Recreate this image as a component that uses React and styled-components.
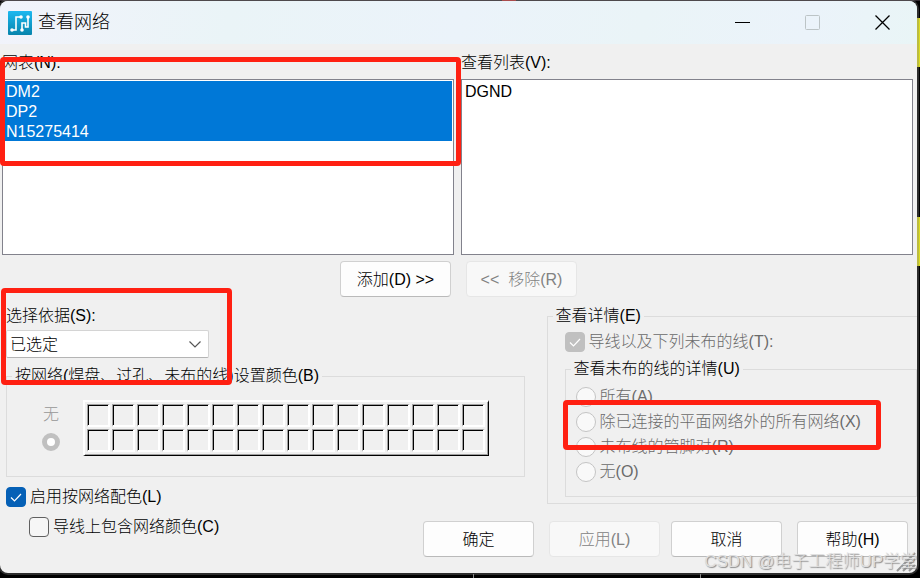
import React, { useState } from 'react';
import styled, { createGlobalStyle, css } from 'styled-components';

const GlobalStyle = createGlobalStyle`
  * {
    box-sizing: border-box;
  }

  body {
    margin: 0;
    background: #000;
    color: #000;
    font: 300 16px/20px "Liberation Sans", "Noto Sans CJK SC", sans-serif;
  }

  button, select, input {
    font: inherit;
    color: inherit;
    margin: 0;
  }
`;

const Desktop = styled.div`
  position: relative;
  min-height: 100vh;
  padding: 1px 3px 5px 0;
  overflow: hidden;
  background:
    linear-gradient(#dcdc20, #dcdc20) right 18px / 3px 49px no-repeat,
    linear-gradient(#dcdc20, #dcdc20) right 217px / 3px 49px no-repeat,
    linear-gradient(#c03030, #c03030) 502px 0 / 14px 1px no-repeat,
    linear-gradient(#888, #888) 473px bottom / 1px 4px no-repeat,
    linear-gradient(#888, #888) 700px bottom / 1px 4px no-repeat,
    linear-gradient(#332b31, #332b31) 0 0 / 100% 1px no-repeat,
    #000;
`;

const Dialog = styled.main`
  position: relative;
  overflow: hidden;
  border-radius: 8px;
  background: #f0f0f0;
  box-shadow: 0 0 0 2px rgba(128, 128, 128, 0.35);
`;

const TitleBar = styled.header`
  display: flex;
  align-items: center;
  height: 43px;
  padding-left: 8px;
  background: linear-gradient(100deg, #f1f3fb, #eaf4f7 25%, #ebf3fa 50%, #eaf4f7 70%, #ebf3fa 88%, #e9f5f6);
`;

const Title = styled.h1`
  flex: 1;
  margin: 0 0 2px 6px;
  font-size: 18px;
  line-height: 24px;
  font-weight: 300;
`;

const WindowButton = styled.button`
  display: flex;
  align-items: center;
  justify-content: center;
  width: 70px;
  height: 42px;
  padding: 0;
  border: 0;
  background: none;
`;

const Lists = styled.section`
  display: grid;
  grid-template-columns: 1fr 1fr;
  gap: 7px;
  padding: 9px 4px 0 2px;
`;

const Field = styled.div`
  position: relative;
  display: flex;
  flex-direction: column;
  align-items: ${props => (props.$stretch ? 'stretch' : 'flex-start')};
  gap: ${props => (props.$stretch ? 6 : 4)}px;
`;

const ListBox = styled.select`
  height: 176px;
  padding: 1px;
  border: 1px solid #82828c;
  border-radius: 0;
  background: #fff;
  overflow-y: auto;
  outline: none;

  option {
    height: 20px;
    min-height: 20px;
    padding: 2px 2px 0;
    line-height: 18px;
  }

  option:checked {
    background: linear-gradient(#0078d7, #0078d7);
    -webkit-text-fill-color: #fff;
  }
`;

const Button = styled.button`
  width: 111px;
  height: 36px;
  padding: 2px 0 0;
  border: 1px solid #d0d0d0;
  border-bottom-color: #bababa;
  border-radius: 4px;
  background: #fdfdfd;
  white-space: pre;

  &:disabled {
    border-color: #e6e6e6;
    background: #f8f8f8;
    color: #828282;
  }
`;

const ButtonPair = styled.div`
  display: flex;
  justify-content: center;
  gap: 15px;
`;

const Transfer = styled(ButtonPair)`
  padding-top: 6px;
`;

const Options = styled.section`
  display: grid;
  grid-template-columns: 7fr 5fr;
  gap: 22px;
  padding: 9px 0 0 6px;
`;

const Combo = styled.div`
  position: relative;

  select {
    display: block;
    width: 203px;
    height: 28px;
    padding: 2px 28px 0 3px;
    appearance: none;
    border: 1px solid #d4d4d4;
    border-bottom-color: #b4b4b4;
    border-radius: 2px;
    background: #fff;
  }

  svg {
    position: absolute;
    top: 11px;
    right: 8px;
    pointer-events: none;
  }
`;

const Group = styled.fieldset`
  min-width: 0;
  margin: 0;
  padding: 0;
  border: 1px solid #dcdcdc;

  legend {
    margin-left: 5px;
    padding: 0 3px;
    white-space: nowrap;
  }
`;

const ColorGroup = styled(Group)`
  margin: 8px 0 10px;

  > div {
    display: flex;
    gap: 22px;
    padding: 14px 0 20px 34px;
  }
`;

const DetailGroup = styled(Group)`
  border-right: 0;

  > div {
    padding: 6px 0 6px 17px;
  }
`;

const NetGroup = styled(Group)`
  position: relative;
  margin-top: 7px;

  > div:first-of-type {
    display: grid;
    gap: 5px;
    padding: 8px 0 14px 10px;
  }
`;

const NoneOption = styled.label`
  display: flex;
  flex-direction: column;
  align-items: center;
  gap: 8px;
  width: 20px;
  padding-top: 5px;
  color: #969696;
`;

const Palette = styled.div`
  display: grid;
  grid-template-columns: repeat(16, 23px);
  gap: 2px;
  padding: 2px 3px 3px 2px;
  border: 2px solid #fff;
  border-right: 1px solid #000;
  border-bottom: 1px solid #000;
  box-shadow: inset -1px -1px #a0a0a0;
`;

const Swatch = styled.button`
  height: 23px;
  padding: 0;
  border: solid;
  border-width: 1px 2px 2px 1px;
  border-color: #a0a0a0 #fff #fff #a0a0a0;
  background: #f0f0f0;
  box-shadow: inset 1px 1px #000;
`;

const Choice = styled.label`
  display: flex;
  align-items: center;
  gap: 4px;
  white-space: nowrap;
  color: ${props => (props.$disabled ? '#6a6a6a' : '#000')};
`;

const tick = "url(\"data:image/svg+xml,%3Csvg xmlns='http://www.w3.org/2000/svg' width='18' height='18' fill='none' stroke='white' stroke-width='1.2'%3E%3Cpath d='M4 9.5l3.5 3.5L14 6'/%3E%3C/svg%3E\")";

const CheckBox = styled.input.attrs({ type: 'checkbox' })`
  appearance: none;
  flex: none;
  width: 20px;
  height: 20px;
  border: 1px solid #606060;
  border-radius: 4px;
  background: #f6f6f6;

  &:checked {
    border-color: #0560b6;
    background: #0560b6 ${tick} center no-repeat;
  }

  &:checked:disabled {
    border-color: #c0c0c0;
    background-color: #c0c0c0;
  }
`;

const Radio = styled.input.attrs({ type: 'radio' })`
  appearance: none;
  flex: none;
  width: 20px;
  height: 20px;
  border: 1px solid #c4c4c4;
  border-radius: 50%;
  background: #f9f9f9;

  ${props => props.$small && css`
    width: 18px;
    height: 18px;
    border: 5px solid #c0c0c0;
    background: #fff;
  `}
`;

const Footer = styled.footer`
  display: flex;
  align-items: flex-start;
  gap: 11px;
  padding: 14px 9px 16px 29px;

  > label {
    margin: -4px auto 0 0;
  }
`;

// red frame laid over the settings that matter
const Mark = styled.div`
  position: absolute;
  top: ${props => props.$top}px;
  left: ${props => props.$left}px;
  width: ${props => props.$width || 'auto'};
  right: ${props => (props.$right === undefined ? 'auto' : `${props.$right}px`)};
  height: ${props => props.$height}px;
  border: 5px solid #ff2012;
  border-radius: 4px;
  pointer-events: none;
  z-index: 1;
`;

const Grip = styled.svg`
  position: absolute;
  right: 1px;
  bottom: 1px;
`;

const Watermark = styled.div`
  position: absolute;
  right: 3px;
  bottom: 4px;
  font-size: 17px;
  line-height: 24px;
  white-space: nowrap;
  color: #dedede;
  text-shadow: 1px 1px 1px #8c8c8c;
  pointer-events: none;
`;

const AppIcon = () => (
  <svg width="24" height="24" viewBox="0 0 24 24" fill="none" aria-hidden="true">
    <defs>
      <linearGradient id="tile" x1="0" y1="0" x2="0" y2="1">
        <stop stopColor="#1cb8f0" />
        <stop offset="1" stopColor="#0784ac" />
      </linearGradient>
    </defs>
    <rect width="24" height="24" rx="1" fill="url(#tile)" />
    <path d="M4 19h4V6h5M14 19v-7h3.5v4H20V6" stroke="#fff" strokeWidth="1.6" />
    <g fill="#fff">
      <circle cx="4" cy="19" r="1.8" />
      <circle cx="13" cy="6" r="1.8" />
      <circle cx="14" cy="19" r="1.8" />
      <circle cx="20" cy="6" r="1.8" />
    </g>
  </svg>
);

const nets = ['DM2', 'DP2', 'N15275414'];
const details = ['所有(A)', '除已连接的平面网络外的所有网络(X)', '未布线的管脚对(R)', '无(O)'];
const swatches = Array.from({ length: 32 }, (_, i) => i + 1);

const App = () => {
  const [selected, setSelected] = useState(nets);
  const [useColors, setUseColors] = useState(true);
  const [includeTraces, setIncludeTraces] = useState(false);

  const handleSelect = (e) => {
    setSelected(Array.from(e.target.selectedOptions, option => option.value));
  };

  return (
    <Desktop>
      <GlobalStyle />
      <Dialog>
        <TitleBar>
          <AppIcon />
          <Title>查看网络</Title>
          <WindowButton aria-label="最小化">
            <svg width="15" height="15"><path d="M0 7.5h15" stroke="#000" /></svg>
          </WindowButton>
          <WindowButton aria-label="最大化" disabled>
            <svg width="15" height="15"><rect x=".5" y=".5" width="14" height="14" rx="1" fill="none" stroke="#bcc4c6" /></svg>
          </WindowButton>
          <WindowButton aria-label="关闭">
            <svg width="15" height="15"><path d="M.5 .5l14 14M14.5 .5l-14 14" stroke="#000" strokeWidth="1.3" /></svg>
          </WindowButton>
        </TitleBar>

        <Lists>
          <Field $stretch>
            <label htmlFor="nets">网表(N):</label>
            <ListBox id="nets" multiple value={selected} onChange={handleSelect}>
              {nets.map(net => <option key={net} value={net}>{net}</option>)}
            </ListBox>
            <Mark $top={4} $left={-2} $right={-7} $height={109} />
          </Field>
          <Field $stretch>
            <label htmlFor="view">查看列表(V):</label>
            <ListBox id="view" multiple>
              <option>DGND</option>
            </ListBox>
          </Field>
        </Lists>

        <Transfer>
          <Button>{'添加(D) >>'}</Button>
          <Button disabled>{'<<  移除(R)'}</Button>
        </Transfer>

        <Options>
          <div>
            <Field>
              <label htmlFor="by">选择依据(S):</label>
              <Combo>
                <select id="by">
                  <option>已选定</option>
                </select>
                <svg width="12" height="7" fill="none"><path d="M.5 .5L6 6l5.5-5.5" stroke="#555" strokeWidth="1.2" /></svg>
              </Combo>
              <Mark $top={-18} $left={-5} $width="231px" $height={97} />
            </Field>

            <ColorGroup>
              <legend>按网络(焊盘、过孔、未布的线)设置颜色(B)</legend>
              <div>
                <NoneOption>
                  无
                  <Radio $small name="color" disabled />
                </NoneOption>
                <Palette>
                  {swatches.map(n => <Swatch key={n} disabled aria-label={`颜色 ${n}`} />)}
                </Palette>
              </div>
            </ColorGroup>

            <Choice>
              <CheckBox checked={useColors} onChange={() => setUseColors(!useColors)} />
              启用按网络配色(L)
            </Choice>
          </div>

          <div>
            <DetailGroup>
              <legend>查看详情(E)</legend>
              <div>
                <Choice $disabled>
                  <CheckBox defaultChecked disabled />
                  导线以及下列未布的线(T):
                </Choice>
                <NetGroup>
                  <legend>查看未布的线的详情(U)</legend>
                  <div>
                    {details.map(text => (
                      <Choice key={text} $disabled>
                        <Radio name="detail" disabled />
                        {text}
                      </Choice>
                    ))}
                  </div>
                  <Mark $top={21} $left={-3} $width="318px" $height={50} />
                </NetGroup>
              </div>
            </DetailGroup>
          </div>
        </Options>

        <Footer>
          <Choice>
            <CheckBox checked={includeTraces} onChange={() => setIncludeTraces(!includeTraces)} />
            导线上包含网络颜色(C)
          </Choice>
          <ButtonPair>
            <Button>确定</Button>
            <Button disabled>应用(L)</Button>
          </ButtonPair>
          <ButtonPair>
            <Button>取消</Button>
            <Button>帮助(H)</Button>
          </ButtonPair>
        </Footer>
        <Grip width="20" height="20" stroke="#999" strokeWidth="2" aria-hidden="true">
          <path d="M1 19L19 1M7 19L19 7M13 19l6-6" />
        </Grip>
      </Dialog>
      <Watermark>CSDN @电子工程师UP学堂</Watermark>
    </Desktop>
  );
};

export default App;
